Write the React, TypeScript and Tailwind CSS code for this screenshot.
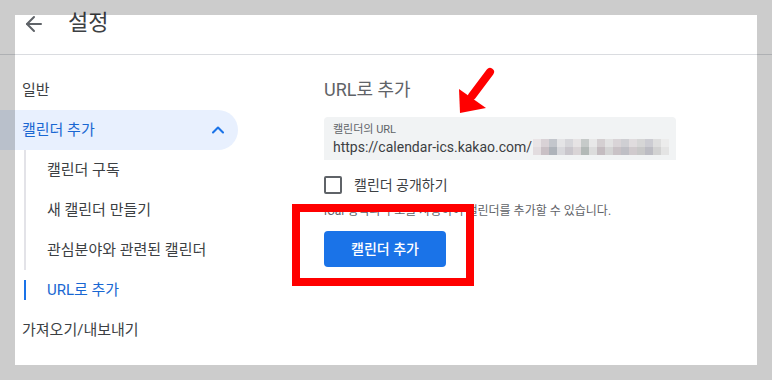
import { ArrowLeft, ChevronUp } from "lucide-react";

const mosaic = [
  ["bg-[#e9e4e6]", "bg-[#d9d2d6]", "bg-[#c3c6cc]", "bg-[#e4e4e6]", "bg-[#d6d6da]", "bg-[#e6e3e4]", "bg-[#c6cac9]", "bg-[#e8e8e8]", "bg-[#d4cfd1]", "bg-[#e2e2e2]", "bg-[#d9d4d7]", "bg-[#cfcfd3]", "bg-[#e0dcde]", "bg-[#d6d6d6]", "bg-[#ccccd2]", "bg-[#dedede]", "bg-[#ececec]"],
  ["bg-[#e2dcdf]", "bg-[#c9c0c5]", "bg-[#aeb3ba]", "bg-[#d8d8dc]", "bg-[#c9c6cc]", "bg-[#d9d4d6]", "bg-[#b3b9b7]", "bg-[#dcdcdc]", "bg-[#c4bcc0]", "bg-[#d4d4d4]", "bg-[#c9c2c6]", "bg-[#bfbfc5]", "bg-[#d0cacd]", "bg-[#c8c8c8]", "bg-[#bcbcc3]", "bg-[#d2d2d2]", "bg-[#e4e4e4]"],
];

const subItems = ["캘린더 구독", "새 캘린더 만들기", "관심분야와 관련된 캘린더"];

export default function App() {
  return (
    <div className="relative w-[772px] h-[380px] overflow-hidden bg-white text-[#3c4043] font-['Roboto','Noto_Sans_CJK_KR',sans-serif]">
      {/* header */}
      <header className="h-[55px] border-b border-[#dadce0] flex items-start pl-[22px] pt-[12px]">
        <ArrowLeft className="w-6 h-6 text-[#5f6368]" strokeWidth={2} />
        <h1 className="ml-[22px] -mt-[3px] text-[22px] leading-[28px]">설정</h1>
      </header>

      <div className="flex">
        {/* nav */}
        <nav className="w-[238px] pt-[15px] text-[15px]">
          <div className="h-10 flex items-center pl-[22px]">일반</div>
          <div className="h-10 flex items-center justify-between pl-[22px] pr-[10px] bg-[#e8f0fe] rounded-r-full text-[#1967d2]">
            <span>캘린더 추가</span>
            <ChevronUp className="w-5 h-5 text-[#1a73e8]" strokeWidth={2.5} />
          </div>
          <div className="ml-[24px]">
            {subItems.map((s) => (
              <div key={s} className="h-10 flex items-center pl-[21px] border-l-2 border-[#e3e3e8]">
                {s}
              </div>
            ))}
            <div className="h-10 flex items-center">
              <div className="w-[2px] h-5 bg-[#1a73e8]" />
              <span className="pl-[21px] text-[#1967d2]">URL로 추가</span>
            </div>
          </div>
          <div className="h-10 flex items-center pl-[22px]">가져오기/내보내기</div>
        </nav>

        {/* main */}
        <main className="pl-[86px] pt-[23px]">
          <h2 className="text-[18px] leading-6 text-[#5f6368]">URL로 추가</h2>
          <div className="mt-[15px] w-[352px] h-[43px] bg-[#f1f3f4] rounded-t px-[9px] pt-[6px]">
            <div className="text-[11px] leading-[14px] text-[#5f6368]">캘린더의 URL</div>
            <div className="flex items-center text-[14px] leading-5 whitespace-nowrap">
              <span className="shrink-0">https://calendar-ics.kakao.com/</span>
              <div className="ml-[1px] flex flex-col shrink-0">
                {mosaic.map((row, i) => (
                  <div key={i} className="flex">
                    {row.map((c, j) => (
                      <div key={j} className={`w-2 h-2 ${c}`} />
                    ))}
                  </div>
                ))}
              </div>
            </div>
          </div>

          <label className="mt-[16px] flex items-center h-[18px] text-[14px]">
            <span className="w-[18px] h-[18px] border-2 border-[#5f6368] rounded-[2px]" />
            <span className="ml-[12px]">캘린더 공개하기</span>
          </label>

          <p className="mt-[9px] text-[12px] leading-4 text-[#5f6368] whitespace-nowrap">
            iCal 형식의 주소를 사용하여 캘린더를 추가할 수 있습니다.
          </p>

          <button className="mt-[12px] w-[122px] h-9 rounded bg-[#1a73e8] text-white text-[14px] font-medium">
            캘린더 추가
          </button>
        </main>
      </div>

      {/* screenshot frame */}
      <div className="absolute inset-0 border-[15px] border-black/20 pointer-events-none" />

      {/* annotations */}
      <div className="absolute left-[292px] top-[204px] w-[182px] h-[82px] border-8 border-[#ff0000]" />
      <svg className="absolute left-0 top-0" width="772" height="380" viewBox="0 0 772 380">
        <line x1="490" y1="72" x2="472" y2="96" stroke="#ff0000" strokeWidth="8" strokeLinecap="round" />
        <polygon points="459,89 486,108 460,113" fill="#ff0000" />
      </svg>
    </div>
  );
}
